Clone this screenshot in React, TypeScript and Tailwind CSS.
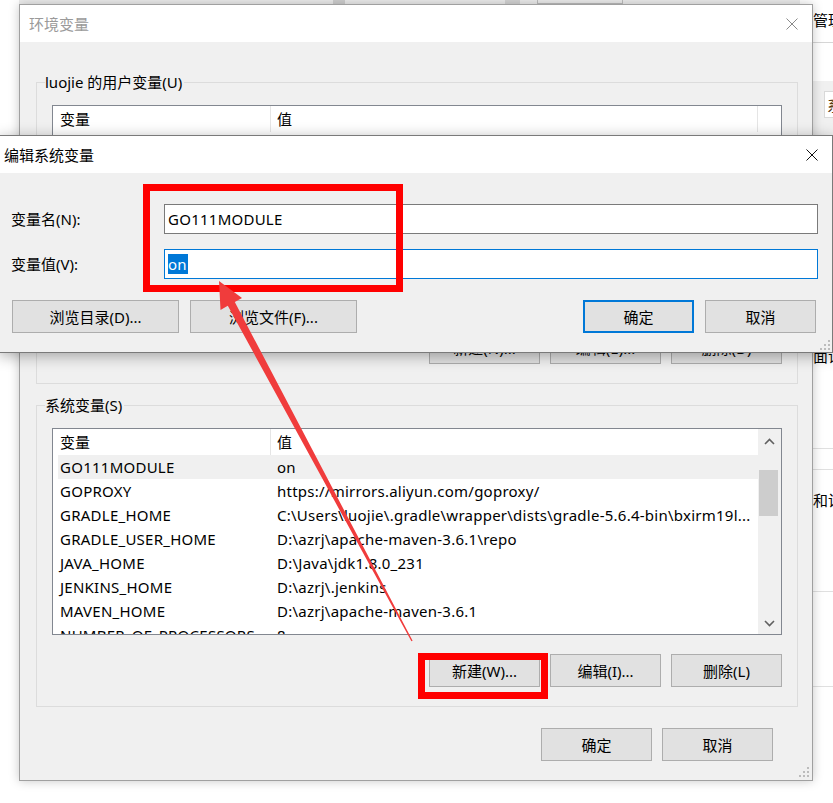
import React from "react";

const sysRows: [string, string][] = [
  ["GO111MODULE", "on"],
  ["GOPROXY", "https://mirrors.aliyun.com/goproxy/"],
  ["GRADLE_HOME", "C:\\Users\\luojie\\.gradle\\wrapper\\dists\\gradle-5.6.4-bin\\bxirm19l..."],
  ["GRADLE_USER_HOME", "D:\\azrj\\apache-maven-3.6.1\\repo"],
  ["JAVA_HOME", "D:\\Java\\jdk1.8.0_231"],
  ["JENKINS_HOME", "D:\\azrj\\.jenkins"],
  ["MAVEN_HOME", "D:\\azrj\\apache-maven-3.6.1"],
  ["NUMBER_OF_PROCESSORS", "8"],
];

function CloseX({ dark }: { dark?: boolean }) {
  return (
    <svg width="12" height="12" viewBox="0 0 12 12">
      <path
        d="M0.5 0.5L11.5 11.5M11.5 0.5L0.5 11.5"
        stroke={dark ? "#111111" : "#8a8a8a"}
        strokeWidth="1"
        fill="none"
      />
    </svg>
  );
}

function Grip() {
  return (
    <svg width="12" height="12" viewBox="0 0 12 12" fill="#bcbcbc">
      <rect x="9" y="1" width="2" height="2" />
      <rect x="5" y="5" width="2" height="2" />
      <rect x="9" y="5" width="2" height="2" />
      <rect x="1" y="9" width="2" height="2" />
      <rect x="5" y="9" width="2" height="2" />
      <rect x="9" y="9" width="2" height="2" />
    </svg>
  );
}

function Chevron({ up }: { up?: boolean }) {
  return (
    <svg width="11" height="7" viewBox="0 0 11 7">
      <path
        d={up ? "M1 6L5.5 1.5L10 6" : "M1 1L5.5 5.5L10 1"}
        fill="none"
        stroke="#606060"
        strokeWidth="1.6"
      />
    </svg>
  );
}

function Btn({ children, wide, primary }: { children: React.ReactNode; wide?: boolean; primary?: boolean }) {
  return (
    <div
      className={
        "flex h-[33px] items-center justify-center bg-[#e1e1e1] " +
        (wide ? "w-[167px] " : "w-[111px] ") +
        (primary ? "border-2 border-[#0078d7]" : "border border-[#adadad]")
      }
    >
      {children}
    </div>
  );
}

function HeaderRow({ thirdDivider }: { thirdDivider?: boolean }) {
  return (
    <div className="flex h-[26px] shrink-0 items-center">
      <div className="flex h-full w-[218px] items-center border-r border-[#e5e5e5] pl-[7px]">变量</div>
      <div className={"flex h-full flex-1 items-center pl-[6px] " + (thirdDivider ? "border-r border-[#e5e5e5]" : "")}>值</div>
    </div>
  );
}

function UserTable() {
  return (
    <div className="flex h-[207px] w-[730px] border border-[#828790] bg-white">
      <div className="flex w-[705px] flex-col">
        <HeaderRow thirdDivider />
      </div>
    </div>
  );
}

function SysTable() {
  return (
    <div className="flex h-[207px] w-[730px] overflow-hidden border border-[#828790] bg-white">
      <div className="flex w-[705px] flex-col overflow-hidden">
        <HeaderRow />
        {sysRows.map(([k, v], i) => (
          <div
            key={k}
            className={
              "ml-[5px] flex h-[24px] shrink-0 items-center whitespace-nowrap tracking-[0.25px] " +
              (i === 0 ? "bg-[#f0f0f0]" : "")
            }
          >
            <div className="w-[212px] pl-[2px]">{k}</div>
            <div className="flex-1 overflow-hidden pl-[7px]">{v}</div>
          </div>
        ))}
      </div>
      <div className="flex w-[23px] flex-col bg-[#f0f0f0]">
        <div className="flex h-[24px] items-center justify-center">
          <Chevron up />
        </div>
        <div className="ml-[1px] mt-[17px] h-[46px] w-[19px] bg-[#cdcdcd]" />
        <div className="flex-1" />
        <div className="flex h-[22px] items-center justify-center">
          <Chevron />
        </div>
      </div>
    </div>
  );
}

function Group({ title, children }: { title: string; children: React.ReactNode }) {
  return (
    <div className="relative flex h-[302px] flex-col border border-[#dcdcdc] px-[15px] pt-[22px]">
      <span className="absolute left-[8px] top-[-11px] bg-[#f0f0f0] pr-[2px] leading-[20px]">{title}</span>
      {children}
    </div>
  );
}

function MainWindow() {
  return (
    <div className="absolute left-[19px] top-[4px] flex h-[777px] w-[794px] flex-col border border-[#a0a0a0] bg-[#f0f0f0] shadow-[0_0_10px_rgba(0,0,0,0.22)]">
      <div className="flex h-[37px] shrink-0 items-center justify-between bg-white pl-[9px] pr-[14px]">
        <span className="text-[#9a9a9a]">环境变量</span>
        <CloseX />
      </div>
      <div className="relative flex flex-1 flex-col pl-[16px] pr-[14px] pt-[40px]">
        <Group title="luojie 的用户变量(U)">
          <UserTable />
          <div className="mt-[19px] flex justify-end gap-[10px]">
            <Btn>新建(N)...</Btn>
            <Btn>编辑(E)...</Btn>
            <Btn>删除(D)</Btn>
          </div>
        </Group>
        <div className="mt-[21px]">
          <Group title="系统变量(S)">
            <SysTable />
            <div className="mt-[19px] flex justify-end gap-[10px]">
              <Btn>新建(W)...</Btn>
              <Btn>编辑(I)...</Btn>
              <Btn>删除(L)</Btn>
            </div>
          </Group>
        </div>
        <div className="mt-[21px] flex justify-end gap-[10px] pr-[25px]">
          <Btn>确定</Btn>
          <Btn>取消</Btn>
        </div>
        <div className="absolute bottom-[2px] right-[2px]">
          <Grip />
        </div>
      </div>
    </div>
  );
}

function EditDialog() {
  return (
    <div className="absolute left-[-1px] top-[135px] flex h-[218px] w-[834px] flex-col border border-[#7a7a7a] bg-[#f0f0f0] shadow-[0_3px_14px_rgba(0,0,0,0.32)]">
      <div className="flex h-[37px] shrink-0 items-center justify-between bg-white pl-[4px] pr-[14px]">
        <span>编辑系统变量</span>
        <CloseX dark />
      </div>
      <div className="relative flex flex-1 flex-col pt-[31px]">
        <div className="flex items-center pl-[11px] pr-[14px]">
          <div className="w-[153px]">变量名(N):</div>
          <div className="flex h-[30px] flex-1 items-center border border-[#7a7a7a] bg-white pl-[3px] tracking-[0.25px]">
            GO111MODULE
          </div>
        </div>
        <div className="mt-[15px] flex items-center pl-[11px] pr-[14px]">
          <div className="w-[153px]">变量值(V):</div>
          <div className="flex h-[30px] flex-1 items-center border border-[#0078d7] bg-white pl-[3px]">
            <span className="bg-[#0078d7] pr-[1px] leading-[20px] tracking-[0.25px] text-white">on</span>
          </div>
        </div>
        <div className="mt-[21px] flex items-center gap-[11px] pl-[12px] pr-[16px]">
          <Btn wide>浏览目录(D)...</Btn>
          <Btn wide>浏览文件(F)...</Btn>
          <div className="flex-1" />
          <Btn primary>确定</Btn>
          <Btn>取消</Btn>
        </div>
        <div className="absolute bottom-[1px] right-[1px]">
          <Grip />
        </div>
      </div>
    </div>
  );
}

function BackgroundWindow() {
  return (
    <>
      <div className="absolute left-[19px] top-0 h-[4px] w-[794px] bg-[#ececec]">
        <div className="absolute left-[314px] top-0 h-[4px] w-[12px] bg-[#cfcfcf]" />
        <div className="absolute left-[486px] top-0 h-[4px] w-[15px] bg-[#d4d4d4]" />
        <div className="absolute left-[518px] top-0 h-[4px] w-[86px] border border-t-0 border-[#bdbdbd]" />
      </div>
      <div className="absolute left-[800px] top-0 flex h-[803px] w-[33px] flex-col overflow-hidden bg-white pl-[13px]">
        <div className="flex h-[43px] shrink-0 items-center whitespace-nowrap border-b border-[#d6d6d6] pb-[3px]">管理</div>
        <div className="h-[38px] shrink-0" />
        <div className="relative ml-[-13px] h-[70px] shrink-0 bg-[#f0f0f0]">
          <div className="absolute left-[24px] top-[10px] flex h-[27px] w-[20px] items-center border border-[#d9d9d9] bg-white pl-[2px] text-[#5a3a10]">
            系
          </div>
        </div>
        <div className="mt-[197px] flex h-[16px] shrink-0 items-center whitespace-nowrap">面试</div>
        <div className="mt-[84px] h-px shrink-0 bg-[#e0e0e0]" />
        <div className="mt-[20px] h-px shrink-0 bg-[#e0e0e0]" />
        <div className="mt-[22px] flex h-[16px] shrink-0 items-center whitespace-nowrap">和设</div>
        <div className="mt-[83px] h-px shrink-0 bg-[#e0e0e0]" />
        <div className="mt-[94px] h-px shrink-0 bg-[#e0e0e0]" />
      </div>
    </>
  );
}

function Annotations() {
  return (
    <>
      <div className="absolute left-[143px] top-[184px] h-[108px] w-[260px] border-[7px] border-[#ff0000]" />
      <div className="absolute left-[418px] top-[653px] h-[46px] w-[130px] border-[7px] border-[#ff0000]" />
      <svg className="absolute left-0 top-0" width="833" height="803" viewBox="0 0 833 803">
        <polygon
          points="219,281 242,298 234.8,302 412.6,640.7 411.4,641.3 227.8,305.8 220.5,310"
          fill="#f03c3c"
        />
      </svg>
    </>
  );
}

export default function App() {
  return (
    <div className="relative h-[803px] w-[833px] overflow-hidden bg-white font-['Noto_Sans','Noto_Sans_CJK_SC',sans-serif] text-[15px] leading-[20px] text-black">
      <BackgroundWindow />
      <MainWindow />
      <EditDialog />
      <Annotations />
    </div>
  );
}
